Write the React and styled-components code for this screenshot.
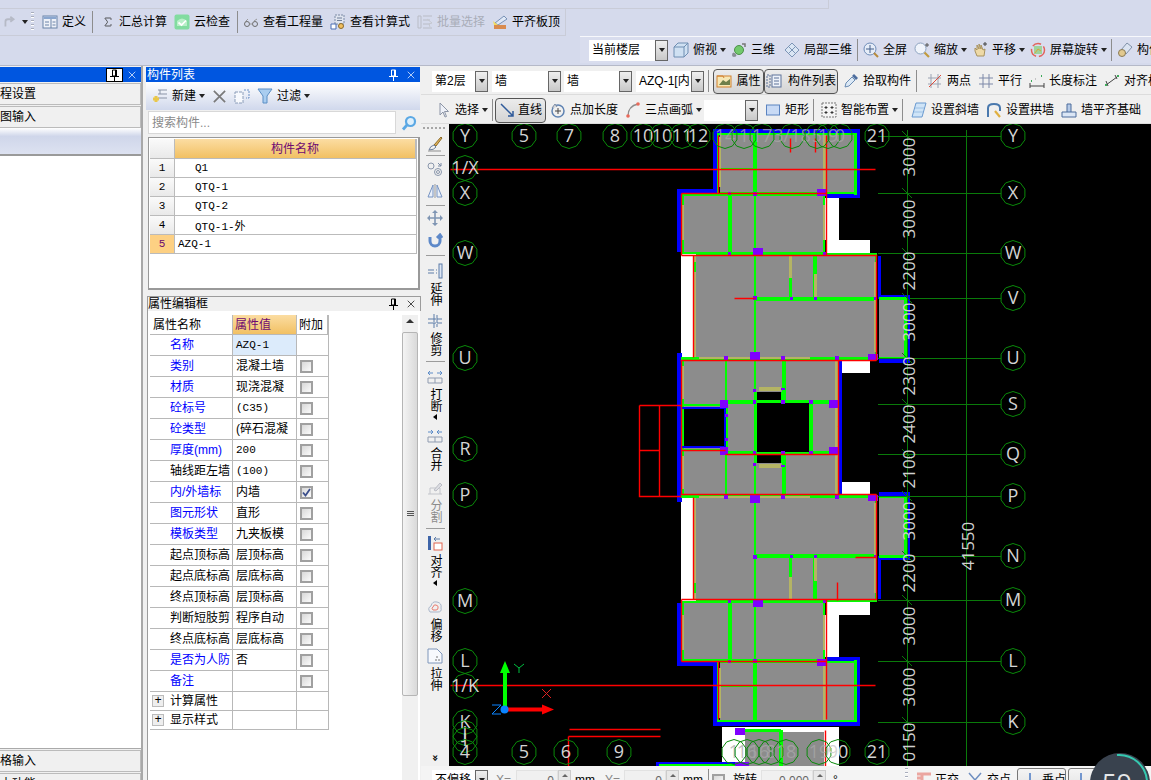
import React from 'react';
import styled, { createGlobalStyle } from 'styled-components';
import { Sigma, X } from 'lucide-react';

const GlobalStyle = createGlobalStyle`
  html, body {
    margin: 0;
    padding: 0;
    background: #f0f0f0;
    overflow: hidden;
  }
  * { box-sizing: border-box; }
`;

const Root = styled.div`
  width: 1151px;
  height: 780px;
  overflow: hidden;
  position: relative;
  background: #f0f0f0;
  color: #000;
  font: 12px/14px "Liberation Sans", "Noto Sans CJK SC", sans-serif;
`;

/* top toolbars */
const Top = styled.div`
  height: 66px;
  background: #d5daec;
  border-bottom: 1px solid #b5b9c8;
`;

const TopStrip = styled.div`
  width: 829px;
  height: 9px;
  border-right: 1px solid #c9ccd8;
  border-bottom: 1px solid #c9ccd8;
`;

const ToolRow = styled.div`
  display: flex;
  align-items: center;
  gap: 7px;
  white-space: nowrap;
`;

const MainBar = styled(ToolRow)`
  width: 566px;
  height: 27px;
  padding-left: 3px;
  border-right: 1px solid #c9ccd8;
  border-bottom: 1px solid #c9ccd8;
`;

const ViewBar = styled(ToolRow)`
  height: 27px;
  margin-left: 580px;
  padding-left: 9px;
  border-top: 1px solid #f7f8fc;
  background: #d9ddee;
  overflow: hidden;
`;

const Gripper = styled.i`
  flex: none;
  width: 3px;
  height: ${({ $h }) => $h || 20}px;
  margin: ${({ $m }) => $m || '0'};
  background: repeating-linear-gradient(#a8adbc 0 1px, #fff 1px 2px, transparent 2px 4px);
`;

const Sep = styled.i`
  flex: none;
  width: 1px;
  height: 22px;
  margin: 0 ${({ $m }) => $m ?? 0}px;
  background: #8d8d8d;
`;

const Tool = styled.span`
  display: inline-flex;
  flex: none;
  align-items: center;
  gap: ${({ $gap }) => $gap ?? 4}px;
  margin-left: ${({ $ml }) => $ml || 0}px;
  color: ${({ $off }) => ($off ? '#a9adb8' : '#000')};
`;

const Caret = styled.i`
  display: inline-block;
  flex: none;
  width: 0;
  height: 0;
  margin-left: ${({ $ml }) => $ml ?? -1}px;
  border-top: 4px solid #222;
  border-left: 3.5px solid transparent;
  border-right: 3.5px solid transparent;
`;

const Combo = styled.span`
  display: flex;
  flex: none;
  width: ${({ $w }) => $w}px;
  height: 21px;
  margin-left: ${({ $ml }) => $ml || 0}px;
  background: #fff;
  font-size: 12px;
`;

const ComboText = styled.span`
  flex: 1;
  min-width: 0;
  padding: 3px 0 0 3px;
  overflow: hidden;
  white-space: nowrap;
`;

const ComboBtn = styled.span`
  display: flex;
  flex: none;
  align-items: center;
  justify-content: center;
  width: 13px;
  border: 1px solid #666;
  background: linear-gradient(#efefef, #c8c8c8);
`;

const IconSvg = styled.svg`
  display: block;
  flex: none;
`;

const Ico = ({ children, s = 16 }) => (
  <IconSvg width={s} height={s} viewBox="0 0 16 16" fill="none">
    {children}
  </IconSvg>
);

const icons = {
  redo: <path d="M3 13V7q0-3 3-3h5M9 1l4 3-4 3" stroke="#b6bac6" strokeWidth="2.2" />,
  define: (
    <>
      <rect x="1" y="2" width="14" height="12" fill="#eef1f8" stroke="#6b83a8" />
      <rect x="1.5" y="2.5" width="13" height="2.5" fill="#8aa6cf" />
      <path d="M9 5v9M3 8h4M3 11h4M10.5 8h3M10.5 11h3" stroke="#6b83a8" />
    </>
  ),
  cloudOk: (
    <>
      <rect x="0.5" y="0.5" width="15" height="15" rx="2" fill="#82dca0" />
      <path d="M3 7q5-5 10 0v5H3z" fill="#b8efc8" />
      <path d="M4.5 8.5l3 2.5 4.5-4.5" stroke="#fff" strokeWidth="1.7" />
    </>
  ),
  glasses: (
    <>
      <circle cx="4" cy="10" r="2.5" stroke="#6d6d6d" />
      <circle cx="12" cy="10" r="2.5" stroke="#6d6d6d" />
      <path d="M6.5 10h3M2 8l3-3M11 7l3-2" stroke="#999" />
    </>
  ),
  calc: (
    <>
      <path d="M5 1h9v9H5z" fill="#dfe4ef" stroke="#7a8aa5" strokeDasharray="2 1" />
      <path d="M1 10h5v5H1z" fill="#fff" stroke="#4a6fb5" />
      <circle cx="11" cy="12" r="2.5" fill="#f2c060" stroke="#8a6a2a" />
      <path d="M7 4h5M7 6.5h5" stroke="#6f7f99" />
    </>
  ),
  batch: (
    <>
      <path d="M1 2h3v12H1zM6 2h9M6 6h7M6 10h7M6 14h9" stroke="#b9bcc6" />
      <path d="M10 5l5 4-3 1 1 3" stroke="#c5c8d0" />
    </>
  ),
  flat: (
    <>
      <path d="M3 9L12 2l3 3-9 6z" fill="#dfe8f6" stroke="#7790b5" />
      <path d="M2 11h12v4H2z" fill="#d98b4f" />
      <path d="M1 7l5 4H2z" fill="#f2dc60" />
    </>
  ),
  cube: (
    <>
      <path d="M1 5l4-4h10v10l-4 4H1z" fill="#cfe0f2" stroke="#6f8eb2" />
      <path d="M1 5h10v10M11 5l4-4" stroke="#6f8eb2" />
    </>
  ),
  three: (
    <>
      <circle cx="8" cy="8" r="4.5" fill="#72c96d" stroke="#4d8f4a" />
      <path d="M11 2h3v3M2 11l3 3" stroke="#777" strokeWidth="1.5" />
      <circle cx="3" cy="13" r="2" fill="#8a8f98" />
    </>
  ),
  part: (
    <>
      <path d="M8 1l7 7-7 7-7-7z" fill="#dbe6f4" stroke="#7d95b6" />
      <path d="M4.5 4.5l7 7M11.5 4.5l-7 7" stroke="#7d95b6" />
    </>
  ),
  full: (
    <>
      <circle cx="7" cy="7" r="6" fill="#e6edf8" stroke="#6f8db8" />
      <path d="M7 3v8M3 7h8" stroke="#45618c" />
      <path d="M11 11l4 4" stroke="#b78a3c" strokeWidth="2" />
    </>
  ),
  zoom: (
    <>
      <circle cx="6.5" cy="6.5" r="5.5" fill="#f0f4fb" stroke="#8da3c0" />
      <path d="M10.5 10.5l4.5 4.5" stroke="#c19a3e" strokeWidth="2.2" />
      <path d="M13 1v4M11 3h4" stroke="#555" />
    </>
  ),
  hand: (
    <>
      <path d="M3 9V6l2 2V3l2 4V2l2 5V3l2 5 2-1-1 7H5z" fill="#eed9a6" stroke="#a8925e" />
      <path d="M13 0v4M11 2h4" stroke="#444" />
    </>
  ),
  rotate: (
    <>
      <circle cx="8" cy="8" r="6.5" stroke="#e2635a" strokeWidth="1.5" strokeDasharray="9 3" />
      <rect x="4" y="4" width="8" height="8" fill="#9fd39b" />
      <path d="M5 11l3-4 3 2" stroke="#d9a53a" />
    </>
  ),
  tool: (
    <>
      <path d="M10 1l5 4-6 7-5-4z" fill="#dbe3f1" stroke="#8090a8" />
      <circle cx="5" cy="11" r="3.5" fill="#e2c98f" stroke="#8a7a55" />
    </>
  ),
  prop: (
    <>
      <rect x="1" y="3" width="14" height="11" fill="#f6e7b4" stroke="#d1812f" />
      <path d="M3 12l4-5 3 2 4-3v6z" fill="#6d7f4a" />
      <path d="M1 3h6l1 2" stroke="#d1812f" />
    </>
  ),
  list: (
    <>
      <rect x="1" y="2" width="3" height="12" stroke="#5d7299" strokeDasharray="2 1" />
      <rect x="6" y="2" width="9" height="12" fill="#eef2f9" stroke="#5d7299" />
      <path d="M8 5h5M8 8h5M8 11h5" stroke="#5d7299" />
    </>
  ),
  dropper: (
    <>
      <path d="M2 14l1-4 6-6 3 3-6 6z" fill="#dce9f6" stroke="#6b8cb3" />
      <path d="M9 3l2-2 4 4-2 2z" fill="#4c6d9e" />
    </>
  ),
  twoPts: (
    <>
      <path d="M1 5h13M1 11h13M4 1v14M11 1v14" stroke="#9aa3b3" />
      <path d="M2 14L14 2" stroke="#dd4a3a" />
    </>
  ),
  parallel: <path d="M1 5h14M1 11h14M5 1v14M11 1v14" stroke="#7d88a8" />,
  lenDim: (
    <>
      <path d="M1 13h14M1 10v5M15 10v5" stroke="#444" />
      <path d="M2 8h1M12 3h1" stroke="#3daa5a" strokeWidth="2" />
      <path d="M6 6h1" stroke="#999" />
    </>
  ),
  alignDim: (
    <>
      <path d="M2 12L13 4M2 8l2 5M11 2l2 4" stroke="#444" />
      <path d="M1 12h2M13 3h2" stroke="#3daa5a" strokeWidth="2" />
    </>
  ),
  cursor: <path d="M5 1v12l3-3 2 5 1.5-.5-2-5h4z" fill="#eef1f8" stroke="#8c95a6" />,
  line: <path d="M2 2l12 12M14 9v5H9" stroke="#2e5a9a" strokeWidth="1.5" />,
  ptLen: (
    <>
      <circle cx="8" cy="9" r="6" stroke="#5f83b3" strokeWidth="1.5" />
      <path d="M8 6v6M5 9h6" stroke="#444" />
      <path d="M2 6l3-4 2 3" fill="#d8d8d8" stroke="#7f8fa8" />
    </>
  ),
  arc: (
    <>
      <path d="M3 14Q3 4 13 2" stroke="#8e8e8e" strokeWidth="1.3" />
      <circle cx="3" cy="14" r="1.8" fill="#e96a5a" />
      <circle cx="13" cy="2" r="1.8" fill="#e96a5a" />
    </>
  ),
  rect: <rect x="1.5" y="3" width="13" height="10" fill="#c8daf5" stroke="#5a83c0" />,
  smart: (
    <>
      <rect x="1" y="1" width="14" height="14" fill="#f4f4f4" stroke="#777" strokeDasharray="2 1" />
      <path d="M5 4v3M3.5 5.5h3M11 4v3M9.5 5.5h3M5 9v3M3.5 10.5h3M11 9v3M9.5 10.5h3" stroke="#333" />
    </>
  ),
  slant: (
    <>
      <path d="M5 1h10l-4 14H1z" fill="#cfe4f7" stroke="#6a9ad0" />
      <path d="M4 6h9M3 10h9" stroke="#9cc0e4" />
    </>
  ),
  archWall: (
    <>
      <path d="M2 15V6q0-4 6-4t6 4v3" stroke="#4a79ae" strokeWidth="2" />
      <path d="M9 9l5 6" stroke="#e0b040" strokeWidth="2.2" />
    </>
  ),
  wallBase: (
    <>
      <path d="M6 2h4v11H6z" fill="#b6cbe8" stroke="#4d6c9c" />
      <path d="M1 10h14v5H1z" fill="#dbe6f5" stroke="#4d6c9c" />
    </>
  ),
  newItem: (
    <>
      <path d="M6 2h9M6 6h9M6 10h9M8 2v4" stroke="#8a93a6" />
      <path d="M4 8v6M1 11h6" stroke="#e9c74a" strokeWidth="3" />
    </>
  ),
  del: <path d="M2 2l12 12M14 2L2 14" stroke="#7a7a7a" strokeWidth="1.8" />,
  copy: (
    <>
      <rect x="1" y="4" width="8" height="11" fill="#f7f9fd" stroke="#8a9cb8" strokeDasharray="3 1" />
      <path d="M10 2h5v8h-3" stroke="#6b8fc4" strokeDasharray="2 1" />
    </>
  ),
  filter: <path d="M1 1h14L10 8v7H6V8z" fill="#a9cdf0" stroke="#5b8ec4" />,
  search: (
    <>
      <circle cx="9.5" cy="6.5" r="4.5" fill="#dff0fc" stroke="#5ba8e4" strokeWidth="2.2" />
      <path d="M6 10l-4 4.5" stroke="#5ba8e4" strokeWidth="2.8" />
    </>
  ),
  brush: (
    <>
      <path d="M7 9l7-8 1 1-6 8z" fill="#e4b458" stroke="#8a6a2a" />
      <path d="M2 14q1-4 5-5l2 2q-2 3-7 3z" fill="#f3f3f3" stroke="#6d7f9b" />
      <path d="M1 15h13" stroke="#8f8f8f" />
    </>
  ),
  circles: (
    <>
      <circle cx="4" cy="5" r="3" stroke="#8a97ac" />
      <circle cx="11" cy="11" r="3.5" stroke="#8a97ac" />
      <circle cx="11" cy="11" r="1.5" stroke="#8a97ac" />
      <path d="M11 2l3 3M14 2v3h-3" stroke="#7a8aa5" />
    </>
  ),
  mirror: (
    <>
      <path d="M1 14L6 2v12zM15 14L10 2v12z" fill="#eaf0fa" stroke="#7693c2" />
      <path d="M8 1v14" stroke="#999" />
    </>
  ),
  move: (
    <>
      <path d="M8 1v14M1 8h14" stroke="#7f95b3" strokeWidth="1.6" />
      <path d="M8 0l3 3H5zM8 16l3-3H5zM0 8l3-3v6zM16 8l-3-3v6z" fill="#7f95b3" />
    </>
  ),
  spin: <path d="M3 4v4a5 5 0 1 0 10 0V3M10 5l3-3 2 3" stroke="#5e89c9" strokeWidth="3" />,
  extend: (
    <>
      <path d="M1 7h6M1 10h6M9 7h1M9 10h1" stroke="#5d7ca8" />
      <rect x="12" y="1" width="3" height="14" fill="#dde6f4" stroke="#5d7ca8" />
    </>
  ),
  trim: <path d="M1 6h14M1 10h14M7 1v14M10 2v12" stroke="#5d7ca8" strokeDasharray="8 1" />,
  split: (
    <>
      <path d="M1 4h5M3 2L1 4l2 2M15 4h-5M13 2l2 2-2 2" stroke="#5d8cc8" />
      <path d="M1 9h14v5H1zM8 9v5" stroke="#8f9bb0" />
    </>
  ),
  merge: (
    <>
      <path d="M1 4h5M4 2l2 2-2 2M15 4h-5M12 2l-2 2 2 2" stroke="#5d8cc8" />
      <path d="M1 9h14v5H1zM8 9v5" stroke="#8f9bb0" />
    </>
  ),
  cut: (
    <>
      <path d="M1 14h14M3 14V8h10v6" stroke="#c2c4ca" />
      <path d="M7 10l6-7 2 2-6 6z" fill="#dcdde2" stroke="#bcbec6" />
    </>
  ),
  align: (
    <>
      <rect x="1" y="1" width="3" height="14" fill="#3d64a8" />
      <rect x="7" y="8" width="8" height="7" fill="#fff" stroke="#e0654f" />
      <path d="M13 4H7M9 2L7 4l2 2" stroke="#5d7ca8" />
    </>
  ),
  offset: (
    <>
      <path d="M3 13q-3-4 1-6 1-5 6-4 5 1 4 6 1 4-3 4z" stroke="#a9b6ca" />
      <path d="M6 11q-2-2 0-3 1-3 3-2 3 1 2 3 0 2-2 2z" stroke="#e87a6e" />
    </>
  ),
  stretch: (
    <>
      <path d="M1 1h9l5 5v9H1z" fill="#f7f9fd" stroke="#7e96ba" />
      <path d="M10 8v2M12 11v2M8 12h2" stroke="#777" />
    </>
  ),
  ortho: <path d="M2 2h14M7 2v14M2 6h5" stroke="#eba6a0" strokeWidth="3" />,
  cross: <path d="M2 1l6 7 6-7M8 8v8" stroke="#6f8fc0" strokeWidth="1.5" />,
  midpoint: <path d="M8 1v14M3 15h10" stroke="#4a79c4" strokeWidth="1.5" />,
};

const Item = ({ icon, label, caret, off, ml }) => (
  <Tool $off={off} $ml={ml}>
    <Ico>{icons[icon]}</Ico>
    {label}
    {caret && <Caret />}
  </Tool>
);

/* body layout */
const Body = styled.div`
  display: flex;
  height: 714px;
`;

const Sidebar = styled.aside`
  display: flex;
  flex: none;
  flex-direction: column;
  width: 143px;
  height: 714px;
  padding-top: 1px;
  overflow: hidden;
  border-right: 2px solid #a8a8a8;
`;

const TitleBar = styled.div`
  display: flex;
  flex: none;
  align-items: center;
  height: 15px;
  padding-left: 1px;
  background: #0056e0;
  color: #fff;
`;

const TitleText = styled.span`
  flex: 1;
`;

const PinBox = styled.span`
  display: flex;
  align-items: center;
  justify-content: center;
  width: 17px;
  height: 14px;
  border: 1px solid ${({ $boxed }) => ($boxed ? '#000' : 'transparent')};
  background: ${({ $boxed }) => ($boxed ? '#fff' : 'transparent')};
`;

const CloseBox = styled.span`
  display: flex;
  align-items: center;
  justify-content: center;
  width: 18px;
`;

const SideRow = styled.div`
  display: flex;
  flex: none;
  align-items: center;
  height: 22px;
  margin-top: 1px;
  overflow: hidden;
  border: 1px solid #bbb;
  border-left: 0;
  background: #f0f0f0;
  white-space: nowrap;
`;

const SideBand = styled.div`
  flex: none;
  height: 28px;
  border-bottom: 2px solid #9a9a9a;
  background: linear-gradient(#fff 0, #cfd6ea 32%, #dde2f1 100%);
`;

const SideEmpty = styled.div`
  flex: none;
  height: 593px;
  background: #fff;
  border-bottom: 1px solid #aaa;
`;

const Middle = styled.section`
  display: flex;
  flex: none;
  flex-direction: column;
  width: 278px;
  padding: 1px 1px 0 3px;
`;

const PanelBar = styled.div`
  display: flex;
  flex: none;
  align-items: center;
  height: 28px;
  padding-left: 6px;
  gap: 7px;
  background: linear-gradient(#fff, #d0d8ec);
`;

const SearchRow = styled.div`
  display: flex;
  flex: none;
  align-items: center;
  height: 25px;
  padding: 0 3px 0 2px;
  background: #f0f0f0;
`;

const SearchInput = styled.div`
  flex: 1;
  height: 23px;
  margin-right: 5px;
  padding: 4px 0 0 3px;
  border: 1px solid #d8d8d8;
  background: #fff;
  color: #8a8a8a;
`;

const ListFrame = styled.div`
  flex: none;
  height: 153px;
  margin: 2px 0 0 2px;
  padding: 1px;
  border: 1px solid #999;
  border-width: 1px 2px 2px 1px;
  background: #fff;
`;

const ListRow = styled.div`
  display: grid;
  grid-template-columns: 25px 1fr;
  height: ${({ $h }) => $h || 19}px;
  border-bottom: 1px solid #bbb;
  border-right: 1px solid #bbb;
`;

const ListIndex = styled.span`
  display: flex;
  align-items: center;
  justify-content: center;
  border-right: 1px solid #bbb;
  background: ${({ $on }) => ($on ? '#fdd083' : 'linear-gradient(#fafafa, #e9e9e9)')};
  color: ${({ $on }) => ($on ? '#6a0a70' : '#000')};
  font-family: "Liberation Mono", monospace;
  font-size: 11px;
`;

const ListName = styled.span`
  display: flex;
  align-items: center;
  padding-left: ${({ $pad }) => $pad}px;
  font: 11px "Liberation Mono", "Noto Sans CJK SC", monospace;
`;

const OrangeHead = styled.span`
  display: flex;
  align-items: center;
  justify-content: center;
  background: linear-gradient(#fbdda2, #f2c063);
  color: #6f0a72;
  border-right: 1px solid #bbb;
`;

const PropsTitle = styled.div`
  display: flex;
  flex: none;
  align-items: center;
  height: 15px;
  margin: 6px -1px 0 1px;
  border: 1px solid #9c9c9c;
  border-bottom: 0;
  background: #f0f0f0;
  color: #000;
`;

const PropsArea = styled.div`
  display: flex;
  flex: 1;
  min-height: 0;
  margin-left: 1px;
  padding: 4px 0 0 2px;
  border-left: 1px solid #9c9c9c;
  background: #fff;
`;

const PropsTable = styled.div`
  flex: none;
  width: 179px;
`;

const PropRow = styled.div`
  display: grid;
  grid-template-columns: 83px 64px 31px;
  height: ${({ $h }) => $h || 21}px;
  border-bottom: 1px solid #b8b8b8;
  border-right: 1px solid #b8b8b8;
`;

const PropCell = styled.span`
  display: flex;
  align-items: center;
  padding-left: ${({ $pad }) => $pad ?? 3}px;
  overflow: hidden;
  border-right: 1px solid #b8b8b8;
  background: ${({ $bg }) => $bg || 'transparent'};
  color: ${({ $color }) => $color || '#000'};
  white-space: nowrap;
`;

const MonoValue = styled.span`
  font: 11px "Liberation Mono", "Noto Sans CJK SC", monospace;
`;

const HeadCell = styled(OrangeHead)`
  justify-content: flex-start;
  padding-left: 2px;
`;

const CheckCell = styled.span`
  display: flex;
  align-items: center;
  padding-left: 3px;
`;

const CheckBox = styled.span`
  display: flex;
  flex: none;
  align-items: center;
  justify-content: center;
  width: 13px;
  height: 13px;
  border: 2px solid #a0a0a0;
  background: linear-gradient(135deg, #d8d8d8, #fbfbfb);
`;

const Expander = styled.span`
  display: flex;
  flex: none;
  align-items: center;
  justify-content: center;
  width: 12px;
  height: 12px;
  margin: 0 6px 0 -18px;
  border: 1px solid #bbb;
  background: #eee;
  font: 12px/10px "Liberation Mono", monospace;
`;

const ScrollTrack = styled.div`
  display: flex;
  flex: none;
  flex-direction: column;
  align-items: center;
  width: 16px;
  height: 470px;
  margin: 0 0 0 73px;
  background: #f0f0f0;
`;

const ScrollArrow = styled.i`
  width: 0;
  height: 0;
  margin: 4px 0 9px;
  border-bottom: 4px solid #333;
  border-left: 4px solid transparent;
  border-right: 4px solid transparent;
`;

const ScrollThumb = styled.div`
  display: flex;
  align-items: center;
  justify-content: center;
  width: 100%;
  height: 364px;
  border: 1px solid #b5b5b5;
  border-radius: 2px;
  background: linear-gradient(90deg, #f4f4f4, #d9d9d9);
`;

const ThumbGrip = styled.i`
  width: 7px;
  height: 6px;
  background: repeating-linear-gradient(#555 0 1px, transparent 1px 2px);
`;

/* drawing area */
const Editor = styled.main`
  display: flex;
  flex: 1;
  flex-direction: column;
  min-width: 0;
`;

const EditBar = styled(ToolRow)`
  flex: none;
  height: 29px;
  padding: 2px 0 0 ${({ $pad }) => $pad || 11}px;
  overflow: hidden;
  border-bottom: 1px solid #dcdcdc;
  background: #f0f0f0;
`;

const Toggle = styled(Tool)`
  justify-content: center;
  height: 25px;
  width: ${({ $w }) => $w}px;
  border: 1px solid #555;
  border-radius: 4px;
  background: linear-gradient(#ececec, #d4d4d4);
`;

const Workspace = styled.div`
  display: flex;
  flex: none;
  height: 642px;
`;

const Rail = styled.div`
  display: flex;
  flex: none;
  flex-direction: column;
  align-items: center;
  width: 28px;
  background: #f0f0f0;
`;

const RailGrip = styled.i`
  flex: none;
  width: 24px;
  height: 2px;
  margin: 3px 0;
  background: repeating-linear-gradient(90deg, #a6a6a6 0 2px, transparent 2px 4px);
`;

const RailTool = styled.div`
  display: flex;
  flex: none;
  flex-direction: column;
  align-items: center;
  gap: 3px;
  margin-top: ${({ $mt }) => $mt}px;
  color: ${({ $off }) => ($off ? '#8c8c8c' : '#000')};
`;

const RailLabel = styled.span`
  writing-mode: vertical-rl;
  line-height: 12px;
`;

const RailSep = styled.i`
  flex: none;
  width: 19px;
  height: 1px;
  margin-top: ${({ $mt }) => $mt}px;
  background: #9c9c9c;
`;

const RailMark = styled.i`
  width: 0;
  height: 0;
  margin-top: -1px;
  border-right: 4px solid #000;
  border-top: 3px solid transparent;
  border-bottom: 3px solid transparent;
`;

const RailMore = styled.span`
  margin-top: auto;
  margin-bottom: 2px;
  font: bold 11px/12px "DejaVu Sans", sans-serif;
  transform: rotate(90deg);
`;

const Canvas = styled.svg`
  display: block;
  flex: 1;
  height: 642px;
  background: #000;
`;

const StatusBar = styled(ToolRow)`
  flex: none;
  height: 28px;
  padding-left: 11px;
  gap: 0;
  background: #f4f4f4;
  overflow: hidden;
`;

const StatusLabel = styled.span`
  flex: none;
  width: ${({ $w }) => $w}px;
  margin-left: ${({ $ml }) => $ml ?? 4}px;
  color: ${({ $dim }) => ($dim ? '#888' : '#000')};
`;

const NumInput = styled.span`
  flex: none;
  width: ${({ $w }) => $w}px;
  height: 20px;
  padding: 3px 3px 0 0;
  background: #f0f0f0;
  border: 1px solid #e2e2e2;
  text-align: right;
  color: #666;
`;

const Spinner = styled.span`
  display: flex;
  flex: none;
  align-items: flex-start;
  justify-content: center;
  width: 13px;
  height: 20px;
  padding-top: 3px;
  border: 1px solid #ccc;
  background: #e8e8e8;
`;

const SpinUp = styled.i`
  width: 0;
  height: 0;
  border-bottom: 3px solid #666;
  border-left: 3px solid transparent;
  border-right: 3px solid transparent;
`;

const SnapToggle = styled(Tool)`
  height: 24px;
  width: ${({ $w }) => $w}px;
  padding-left: 4px;
  border: 1px solid #777;
  border-radius: 3px;
  background: linear-gradient(#f4f4f4, #e2e2e2);
`;

const Gauge = styled.div`
  position: absolute;
  left: 1089px;
  top: 752px;
  width: 62px;
  height: 62px;
`;

const GaugeText = styled.span`
  position: absolute;
  left: 13px;
  top: 15px;
  color: #e4e6e8;
  font: 26px/30px "Open Sans", sans-serif;
`;

/* plan data: upper half, the lower half is the same mirrored at y=427.5 */
const W = '#fff';
const GR = '#8c8c8c';
const BL = '#0000ff';
const G = '#00ff00';
const OL = '#b4b464';
const PU = '#7f00ff';
const BK = '#000';

const halfRects = [
  [824, 198, 16, 42, W], [827, 240, 44, 16, W], [682, 252, 15, 106, W], [843, 361, 28, 12, W],
  [721, 135, 136, 58, GR], [685, 196, 139, 57, GR], [697, 255, 179, 102, GR], [880, 300, 27, 57, GR],
  [685, 360, 155, 68, GR],
  [714, 129, 147, 5, BL], [714, 129, 6, 66, BL], [858, 129, 3, 69, BL], [827, 194, 34, 4, BL],
  [678, 189, 42, 6, BL], [678, 189, 5, 63, BL], [879, 256, 3, 42, BL], [879, 295, 32, 4, BL],
  [908, 295, 3, 68, BL], [880, 358, 31, 5, BL], [678, 353, 5, 75, BL], [840, 361, 3, 67, BL],
  [718, 133, 140, 2, G], [718, 135, 2, 58, G], [855, 135, 3, 60, G], [721, 192, 137, 2, G],
  [754, 135, 4, 58, G], [721, 168, 33, 2, G], [720, 137, 2, 50, OL], [824, 135, 3, 58, OL],
  [683, 193, 141, 3, G], [683, 196, 2, 57, G], [824, 196, 2, 57, G], [683, 252, 143, 2, G],
  [729, 196, 4, 57, G], [683, 205, 2, 35, OL], [824, 205, 2, 35, OL],
  [697, 253, 181, 2, G], [695, 256, 2, 101, OL], [695, 262, 2, 10, G], [876, 255, 2, 105, G],
  [756, 297, 120, 4, G], [790, 256, 3, 42, G], [790, 256, 3, 22, OL], [814, 256, 4, 42, G], [815, 274, 3, 24, OL],
  [880, 297, 28, 3, G], [905, 297, 3, 60, G], [880, 357, 28, 2, G], [875, 262, 2, 90, OL],
  [682, 357, 196, 3, G], [700, 357, 111, 2, OL],
  [683, 361, 2, 67, G], [683, 366, 2, 33, OL], [726, 361, 2, 40, G], [783, 361, 4, 42, G],
  [836, 361, 3, 67, OL], [728, 400, 110, 4, G], [683, 404, 42, 2, G],
  [685, 408, 40, 20, BK], [758, 403, 52, 25, BK], [758, 392, 24, 8, BK], [760, 387, 22, 4, OL],
  [683, 407, 42, 2, BL], [725, 408, 2, 20, BL], [727, 404, 2, 24, G],
  [756, 392, 2, 36, G], [810, 403, 4, 25, G], [782, 392, 4, 11, G],
  [755, 135, 2, 293, G],
  [818, 189, 9, 7, PU], [754, 248, 10, 8, PU], [751, 352, 10, 8, PU], [869, 354, 10, 6, PU],
  [754, 192, 4, 4, PU], [729, 192, 3, 3, PU], [729, 252, 3, 3, PU], [824, 252, 4, 4, PU],
  [725, 356, 4, 4, PU], [782, 356, 4, 4, PU], [836, 356, 4, 4, PU],
  [754, 296, 4, 4, PU], [791, 297, 3, 3, PU], [815, 297, 3, 3, PU], [875, 297, 3, 3, PU],
  [721, 400, 8, 8, PU], [830, 400, 9, 8, PU], [754, 400, 3, 4, PU], [782, 400, 4, 4, PU],
  [810, 400, 4, 4, PU], [726, 414, 3, 3, PU], [754, 389, 3, 3, PU], [782, 388, 4, 2, PU],
];

const halfRed =
  'M719 135V193M827 135V255M682 193H827M682 193V255M682 255H877V360M694 255V357M681 360H877' +
  'M682 360V428M839 360V428M451 169H876';

const extraRed =
  'M640 405H682M640 405V496H682M660 405V496M640 450H660M682 450H726M726 454H838M838 582V600' +
  'M735 298H756M791 138V152M816 138V152M856 557H877' +
  'M570 729H661M569 736H661M569 736V766M826 730V766';

const bottomRects = [
  [723, 727, 117, 39, W], [746, 732, 79, 34, GR], [780, 730, 4, 36, G], [745, 729, 37, 3, G],
  [736, 728, 10, 7, PU], [657, 762, 83, 4, BL], [660, 764, 90, 2, G], [736, 762, 14, 4, PU],
];

const leftAxis = [
  ['Y', 136], ['1/X', 168], ['X', 193], ['W', 253], ['U', 358], ['R', 449], ['P', 495],
  ['M', 601], ['L', 661], ['1/K', 686], ['K', 722], ['J', 733], ['I', 740], ['4', 752],
];

const rightAxis = [
  ['Y', 136], ['X', 193], ['W', 253], ['V', 298], ['U', 358], ['S', 404], ['Q', 454],
  ['P', 496], ['N', 556], ['M', 600], ['L', 661], ['K', 722],
];

const topAxis = [
  ['5', 525], ['7', 570], ['8', 616], ['10', 644], ['10', 663], ['11', 683], ['12', 699],
  ['14', 726, true], ['1', 745, true], ['17', 763, true], ['3/18', 793, true], ['5', 818, true],
  ['19', 829, true], ['0', 841, true], ['21', 878],
];

const bottomAxis = [
  ['5', 525], ['6', 567], ['9', 620], ['1', 735, true], ['16', 748, true], ['16', 760, true],
  ['8', 772, true], ['18', 787, true], ['19', 820, true], ['90', 839], ['21', 878],
];

const dims = [
  ['3000', 157], ['3000', 219], ['2200', 271], ['3000', 322], ['2300', 376], ['2400', 424],
  ['2100', 469], ['3000', 521], ['2200', 573], ['3000', 626], ['3000', 687], ['0150', 742],
];

const ringPoints = (cx, cy, r = 12.5, n = 10) =>
  Array.from({ length: n }, (_, i) => {
    const a = ((i + 0.5) / n) * Math.PI * 2;
    return `${(cx + Math.cos(a) * r).toFixed(1)},${(cy + Math.sin(a) * r).toFixed(1)}`;
  }).join(' ');

const Bubble = ({ x, y, label, dim }) => (
  <g>
    <polygon points={ringPoints(x, y)} fill="none" stroke="#0a8a0a" shapeRendering="auto" />
    <text
      x={x}
      y={y + 6}
      textAnchor="middle"
      fontFamily="Open Sans, sans-serif"
      fontSize="18"
      fill={dim ? '#a8a8a8' : '#d4d4d4'}
      fillOpacity={dim ? 0.75 : 1}
    >
      {label}
    </text>
  </g>
);

const DimText = ({ x, y, children }) => (
  <text
    transform={`translate(${x} ${y}) rotate(-90)`}
    textAnchor="middle"
    fontFamily="Open Sans, sans-serif"
    fontSize="17"
    fill="#d0d0d0"
  >
    {children}
  </text>
);

const RedLines = ({ d }) => (
  <path
    d={d}
    transform="translate(0.5 0.5)"
    fill="none"
    stroke="#ff0000"
    strokeWidth="1.4"
    shapeRendering="auto"
  />
);

const PlanHalf = () => (
  <>
    {halfRects.map(([x, y, w, h, c], i) => (
      <rect key={i} x={x} y={y} width={w} height={h} fill={c} />
    ))}
    <RedLines d={halfRed} />
  </>
);

const Plan = () => (
  <Canvas viewBox="451 124 700 642" width="700" height="642" shapeRendering="crispEdges">
    <PlanHalf />
    <g transform="translate(0 855) scale(1 -1)">
      <PlanHalf />
    </g>
    {bottomRects.map(([x, y, w, h, c], i) => (
      <rect key={i} x={x} y={y} width={w} height={h} fill={c} />
    ))}
    <RedLines d={extraRed} />
    <g stroke="#0a7a0a" fill="none">
      <path d="M908 130V766M967 130V766" />
      {rightAxis.map(([, y], i) => (
        <path key={i} d={`M${y === 298 || y === 556 ? 911 : 879} ${y}H1002M903 ${y - 5}l10 10`} />
      ))}
    </g>
    {leftAxis.map(([t, y], i) => (
      <Bubble key={i} x={466} y={y} label={t} />
    ))}
    {rightAxis.map(([t, y], i) => (
      <Bubble key={i} x={1014} y={y} label={t} />
    ))}
    {topAxis.map(([t, x, d], i) => (
      <Bubble key={i} x={x} y={136} label={t} dim={d} />
    ))}
    {bottomAxis.map(([t, x, d], i) => (
      <Bubble key={i} x={x} y={752} label={t} dim={d} />
    ))}
    {dims.map(([t, y], i) => (
      <DimText key={i} x={916} y={y}>
        {t}
      </DimText>
    ))}
    <DimText x={975} y={546}>
      41550
    </DimText>
    <g shapeRendering="auto">
      <path d="M506 708V672" stroke="#00ff00" strokeWidth="4" />
      <path d="M506 661l-5 12h10z" fill="#00ff00" />
      <path d="M508 709.5H545" stroke="#ff0000" strokeWidth="4" />
      <path d="M555 709.5l-12-5v10z" fill="#ff0000" />
      <circle cx="505.5" cy="709.5" r="4" fill="#0a84ff" />
      <path d="M515 664l5 4 5-4M520 668v5" stroke="#00c040" fill="none" />
      <path d="M543 689l9 9M552 689l-9 9" stroke="#e02020" fill="none" />
      <path d="M493 705h9l-9 9h9" stroke="#0a84ff" fill="none" />
    </g>
  </Canvas>
);

const props = [
  ['名称', 'AZQ-1', 'b', 'mono', 'none'],
  ['类别', '混凝土墙', 'b'],
  ['材质', '现浇混凝', 'b'],
  ['砼标号', '(C35)', 'b', 'mono'],
  ['砼类型', '(碎石混凝', 'b'],
  ['厚度(mm)', '200', 'b', 'mono'],
  ['轴线距左墙', '(100)', '', 'mono'],
  ['内/外墙标', '内墙', 'b', '', 'on'],
  ['图元形状', '直形', 'b'],
  ['模板类型', '九夹板模', 'b'],
  ['起点顶标高', '层顶标高', ''],
  ['起点底标高', '层底标高', ''],
  ['终点顶标高', '层顶标高', ''],
  ['判断短肢剪', '程序自动', ''],
  ['终点底标高', '层底标高', ''],
  ['是否为人防', '否', 'b'],
  ['备注', '', 'b'],
];

const railTools = [
  { kind: 'tool', icon: 'brush', mt: 4 },
  { kind: 'sep', mt: 3 },
  { kind: 'tool', icon: 'circles', mt: 5 },
  { kind: 'tool', icon: 'mirror', mt: 6 },
  { kind: 'sep', mt: 6 },
  { kind: 'tool', icon: 'move', mt: 4 },
  { kind: 'tool', icon: 'spin', mt: 7 },
  { kind: 'sep', mt: 6 },
  { kind: 'tool', icon: 'extend', label: '延伸', mt: 7 },
  { kind: 'tool', icon: 'trim', label: '修剪', mt: 7 },
  { kind: 'sep', mt: 5 },
  { kind: 'tool', icon: 'split', label: '打断', mark: true, mt: 7 },
  { kind: 'tool', icon: 'merge', label: '合并', mt: 8 },
  { kind: 'tool', icon: 'cut', label: '分割', off: true, mt: 9 },
  { kind: 'sep', mt: 5 },
  { kind: 'tool', icon: 'align', label: '对齐', mark: true, mt: 6 },
  { kind: 'tool', icon: 'offset', label: '偏移', mt: 13 },
  { kind: 'tool', icon: 'stretch', label: '拉伸', mt: 6 },
];

const CheckTick = () => (
  <svg width="9" height="9" viewBox="0 0 9 9" fill="none">
    <path d="M1 4.5l2.5 3L8 1" stroke="#3c4f8c" strokeWidth="1.8" />
  </svg>
);

const ComboBox = ({ w, ml, text }) => (
  <Combo $w={w} $ml={ml}>
    <ComboText>{text}</ComboText>
    <ComboBtn>
      <Caret $ml={0} />
    </ComboBtn>
  </Combo>
);

const SmallPin = ({ boxed, color = '#fff' }) => (
  <PinBox $boxed={boxed}>
    <svg width="11" height="12" viewBox="0 0 11 12" fill="none" stroke={boxed ? '#000' : color}>
      <path d="M3.5 1h4v6h-4zM1 7.5h9M5.5 8v4M6.5 1v6" />
    </svg>
  </PinBox>
);

const CloseMark = () => (
  <CloseBox>
    <X size={12} strokeWidth={1.4} />
  </CloseBox>
);

export default function App() {
  return (
    <Root>
      <GlobalStyle />
      <Top>
        <TopStrip />
        <MainBar>
          <Ico s={13}>{icons.redo}</Ico>
          <Caret $ml={-1} />
          <Gripper $m="0 1px 0 -4px" />
          <Item icon="define" label="定义" />
          <Sep $m={-1} />
          <Tool $gap={5} $ml={3}>
            <Sigma size={12} color="#333" strokeWidth={1.6} />
            汇总计算
          </Tool>
          <Item icon="cloudOk" label="云检查" />
          <Sep />
          <Item icon="glasses" label="查看工程量" ml={-2} />
          <Item icon="calc" label="查看计算式" />
          <Item icon="batch" label="批量选择" off />
          <Item icon="flat" label="平齐板顶" />
        </MainBar>
        <ViewBar>
          <ComboBox w={79} text="当前楼层" />
          <Item icon="cube" label="俯视" caret ml={-2} />
          <Item icon="three" label="三维" ml={-2} />
          <Item icon="part" label="局部三维" ml={2} />
          <Sep $m={-2} />
          <Item icon="full" label="全屏" />
          <Item icon="zoom" label="缩放" caret />
          <Item icon="hand" label="平移" caret ml={-2} />
          <Item icon="rotate" label="屏幕旋转" caret ml={-2} />
          <Sep $m={-3} />
          <Item icon="tool" label="构件" ml={1} />
        </ViewBar>
      </Top>
      <Body>
        <Sidebar>
          <TitleBar>
            <TitleText />
            <SmallPin boxed />
            <CloseMark />
          </TitleBar>
          <SideRow>程设置</SideRow>
          <SideRow>图输入</SideRow>
          <SideBand />
          <SideEmpty />
          <SideRow>格输入</SideRow>
          <SideRow>本功能</SideRow>
        </Sidebar>
        <Middle>
          <TitleBar>
            <TitleText>构件列表</TitleText>
            <SmallPin />
            <CloseMark />
          </TitleBar>
          <PanelBar>
            <Item icon="newItem" label="新建" caret />
            <Ico s={15}>{icons.del}</Ico>
            <Ico>{icons.copy}</Ico>
            <Item icon="filter" label="过滤" caret />
          </PanelBar>
          <SearchRow>
            <SearchInput>搜索构件...</SearchInput>
            <Ico>{icons.search}</Ico>
          </SearchRow>
          <ListFrame>
            <ListRow $h={20}>
              <ListIndex />
              <OrangeHead>构件名称</OrangeHead>
            </ListRow>
            {['Q1', 'QTQ-1', 'QTQ-2', 'QTQ-1-外'].map((n, i) => (
              <ListRow key={n}>
                <ListIndex>{i + 1}</ListIndex>
                <ListName $pad={20}>{n}</ListName>
              </ListRow>
            ))}
            <ListRow>
              <ListIndex $on>5</ListIndex>
              <ListName $pad={3}>AZQ-1</ListName>
            </ListRow>
          </ListFrame>
          <PropsTitle>
            <TitleText>属性编辑框</TitleText>
            <SmallPin color="#000" />
            <CloseMark />
          </PropsTitle>
          <PropsArea>
            <PropsTable>
              <PropRow $h={20}>
                <PropCell>属性名称</PropCell>
                <HeadCell>属性值</HeadCell>
                <PropCell $pad={2}>附加</PropCell>
              </PropRow>
              {props.map(([name, value, blue, mono, box]) => (
                <PropRow key={name}>
                  <PropCell $pad={20} $color={blue ? '#0000ff' : '#000'}>
                    {name}
                  </PropCell>
                  <PropCell $bg={box === 'none' ? '#dcebfb' : ''}>
                    {mono ? <MonoValue>{value}</MonoValue> : value}
                  </PropCell>
                  <CheckCell>
                    {box !== 'none' && <CheckBox>{box === 'on' && <CheckTick />}</CheckBox>}
                  </CheckCell>
                </PropRow>
              ))}
              {['计算属性', '显示样式'].map((name) => (
                <PropRow key={name} $h={19}>
                  <PropCell $pad={20}>
                    <Expander>+</Expander>
                    {name}
                  </PropCell>
                  <PropCell />
                  <CheckCell />
                </PropRow>
              ))}
            </PropsTable>
            <ScrollTrack>
              <ScrollArrow />
              <ScrollThumb>
                <ThumbGrip />
              </ScrollThumb>
            </ScrollTrack>
          </PropsArea>
        </Middle>
        <Editor>
          <EditBar>
            <ComboBox w={56} text="第2层" />
            <ComboBox w={69} ml={-3} text="墙" />
            <ComboBox w={68} ml={-4} text="墙" />
            <ComboBox w={68} ml={-3} text="AZQ-1[内" />
            <Sep $m={-3} />
            <Toggle $w={51}>
              <Ico>{icons.prop}</Ico>
              属性
            </Toggle>
            <Toggle $w={74} $gap={6} $ml={-7}>
              <Ico>{icons.list}</Ico>
              构件列表
            </Toggle>
            <Item icon="dropper" label="拾取构件" ml={-2} />
            <Sep $m={-2} />
            <Item icon="twoPts" label="两点" ml={5} />
            <Item icon="parallel" label="平行" />
            <Item icon="lenDim" label="长度标注" />
            <Item icon="alignDim" label="对齐标注" />
          </EditBar>
          <EditBar $pad={14}>
            <Item icon="cursor" label="选择" caret />
            <Sep $m={-3} />
            <Toggle $w={51} $gap={3} $ml={-2}>
              <Ico>{icons.line}</Ico>
              直线
            </Toggle>
            <Item icon="ptLen" label="点加长度" ml={-3} />
            <Item icon="arc" label="三点画弧" caret />
            <ComboBox w={54} ml={-5} text="" />
            <Item icon="rect" label="矩形" />
            <Sep $m={-3} />
            <Item icon="smart" label="智能布置" caret ml={3} />
            <Sep $m={-3} />
            <Item icon="slant" label="设置斜墙" ml={4} />
            <Item icon="archWall" label="设置拱墙" />
            <Item icon="wallBase" label="墙平齐基础" />
          </EditBar>
          <Workspace>
            <Rail>
              <RailGrip />
              {railTools.map((t, i) =>
                t.kind === 'sep' ? (
                  <RailSep key={i} $mt={t.mt} />
                ) : (
                  <RailTool key={i} $mt={t.mt} $off={t.off}>
                    <Ico>{icons[t.icon]}</Ico>
                    {t.label && <RailLabel>{t.label}</RailLabel>}
                    {t.mark && <RailMark />}
                  </RailTool>
                )
              )}
              <RailMore>»</RailMore>
            </Rail>
            <Plan />
          </Workspace>
          <StatusBar>
            <ComboBox w={56} text="不偏移" />
            <StatusLabel $w={20} $ml={8} $dim>
              X=
            </StatusLabel>
            <NumInput $w={42}>0</NumInput>
            <Spinner>
              <SpinUp />
            </Spinner>
            <StatusLabel $w={26}>mm</StatusLabel>
            <StatusLabel $w={19} $dim>
              Y=
            </StatusLabel>
            <NumInput $w={42}>0</NumInput>
            <Spinner>
              <SpinUp />
            </Spinner>
            <StatusLabel $w={25}>mm</StatusLabel>
            <Sep />
            <CheckCell>
              <CheckBox />
            </CheckCell>
            <StatusLabel $w={28} $ml={8}>
              旋转
            </StatusLabel>
            <NumInput $w={52}>0.000</NumInput>
            <Spinner>
              <SpinUp />
            </Spinner>
            <StatusLabel $w={72} $ml={7}>
              °
            </StatusLabel>
            <Gripper $h={24} />
            <Item icon="ortho" label="正交" ml={7} />
            <Item icon="cross" label="交点" ml={8} />
            <SnapToggle $w={49} $ml={6}>
              <Ico>{icons.midpoint}</Ico>
              垂点
            </SnapToggle>
            <SnapToggle $w={60} $ml={2}>
              <Ico>{icons.midpoint}</Ico>
              中点
            </SnapToggle>
          </StatusBar>
        </Editor>
      </Body>
      <Gauge>
        <svg width="62" height="62" viewBox="0 0 62 62" fill="none">
          <circle cx="31" cy="31" r="30" fill="#39424e" />
          <path d="M28 3a28 28 0 0 1 30 26" stroke="#35c8b0" strokeWidth="2" />
        </svg>
        <GaugeText>59</GaugeText>
      </Gauge>
    </Root>
  );
}
